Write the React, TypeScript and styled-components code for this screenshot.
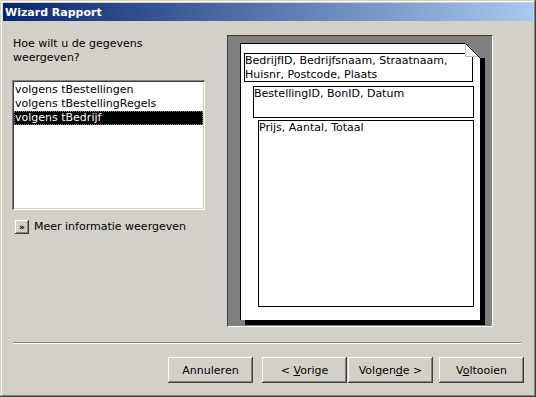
import styled, { createGlobalStyle } from "styled-components";

const GlobalStyle = createGlobalStyle`
  html, body {
    margin: 0;
    padding: 0;
    background: #d4d0c8;
  }
  body {
    font-family: "DejaVu Sans", Verdana, sans-serif;
    font-size: 11px;
    color: #000;
  }
`;

const items = ["volgens tBestellingen", "volgens tBestellingRegels", "volgens tBedrijf"];

const App = () => {
  return (
    <>
      <GlobalStyle />
      <Window>
        <TitleBar>Wizard Rapport</TitleBar>
        <Body>
          <Top>
            <Left>
              <Question>
                Hoe wilt u de gegevens
                <br />
                weergeven?
              </Question>
              <ListBox>
                {items.map((it, i) => (
                  <Item key={it} $selected={i === 2}>
                    {it}
                  </Item>
                ))}
              </ListBox>
              <MoreRow>
                <SmallButton>»</SmallButton>
                <span>Meer informatie weergeven</span>
              </MoreRow>
            </Left>
            <Frame>
              <Sheet>
                <Field $indent={3} $w={229} $h={29} $gap={9}>
                  BedrijfID, Bedrijfsnaam, Straatnaam,
                  <br />
                  Huisnr, Postcode, Plaats
                </Field>
                <Field $indent={12} $w={221} $h={32} $gap={4}>
                  BestellingID, BonID, Datum
                </Field>
                <Field $indent={17} $w={216} $h={187} $gap={2}>
                  Prijs, Aantal, Totaal
                </Field>
                <DogEar width="21" height="15" viewBox="0 0 21 15">
                  <polygon points="0,0 21,0 21,15 14,15 14,14" fill="#808080" />
                  <polygon points="0.5,0.5 0.5,13.5 14,13.5" fill="#ffffff" stroke="#c0c0c0" strokeWidth="1" />
                  <line x1="0.5" y1="0.5" x2="14" y2="14" stroke="#000" strokeWidth="1" />
                  <rect x="14" y="14" width="1" height="1" fill="#000" />
                </DogEar>
              </Sheet>
            </Frame>
          </Top>
          <Separator />
          <Buttons>
            <Button $after={9}>Annuleren</Button>
            <Button $after={1}>
              &lt; <u>V</u>orige
            </Button>
            <Button $after={6}>
              Volgen<u>d</u>e &gt;
            </Button>
            <Button>
              V<u>o</u>ltooien
            </Button>
          </Buttons>
        </Body>
      </Window>
    </>
  );
};

export default App;

const Window = styled.div`
  width: 536px;
  height: 397px;
  box-sizing: border-box;
  padding: 3px;
  background: #d4d0c8;
  box-shadow: inset -1px -1px #404040, inset 1px 1px #d4d0c8,
    inset -2px -2px #808080, inset 2px 2px #ffffff;
  display: flex;
  flex-direction: column;
`;

const TitleBar = styled.div`
  height: 18px;
  flex-shrink: 0;
  display: flex;
  align-items: center;
  padding-left: 2px;
  background: linear-gradient(to right, #0a246a, #a6caf0);
  color: #fff;
  font-weight: bold;
  font-size: 11px;
`;

const Body = styled.div`
  flex: 1;
  display: flex;
  flex-direction: column;
  padding: 14px 9px 0 9px;
`;

const Top = styled.div`
  display: flex;
  align-items: flex-start;
`;

const Left = styled.div`
  width: 193px;
  display: flex;
  flex-direction: column;
`;

const Question = styled.div`
  margin: 2px 0 0 1px;
  line-height: 14px;
`;

const ListBox = styled.div`
  margin-top: 15px;
  width: 193px;
  height: 130px;
  box-sizing: border-box;
  padding: 3px 2px 2px;
  background: #fff;
  box-shadow: inset 1px 1px #808080, inset -1px -1px #ffffff,
    inset 2px 2px #404040, inset -2px -2px #d4d0c8;
`;

const Item = styled.div<{ $selected?: boolean }>`
  height: 14px;
  line-height: 14px;
  padding-left: 1px;
  white-space: nowrap;
  background: ${(p) => (p.$selected ? "#000" : "transparent")};
  color: ${(p) => (p.$selected ? "#fff" : "#000")};
  outline: ${(p) => (p.$selected ? "1px dotted #808080" : "none")};
  outline-offset: -1px;
`;

const MoreRow = styled.div`
  margin-top: 10px;
  display: flex;
  align-items: center;
  gap: 5px;
  padding-left: 3px;
  line-height: 14px;
`;

const SmallButton = styled.div`
  width: 14px;
  height: 14px;
  box-sizing: border-box;
  display: flex;
  align-items: center;
  justify-content: center;
  font-size: 9px;
  font-weight: bold;
  line-height: 1;
  background: #d4d0c8;
  box-shadow: inset -1px -1px #404040, inset 1px 1px #ffffff,
    inset -2px -2px #808080;
`;

const Frame = styled.div`
  margin-left: 22px;
  width: 266px;
  height: 292px;
  box-sizing: border-box;
  background: #808080;
  border: 1px solid;
  border-color: #404040 #ffffff #ffffff #404040;
  padding: 7px 0 0 12px;
`;

const Sheet = styled.div`
  position: relative;
  width: 240px;
  height: 277px;
  box-sizing: border-box;
  background: #fff;
  border-left: 1px solid #000;
  border-top: 1px solid #000;
  box-shadow: 5px 5px 0 #000;
  display: flex;
  flex-direction: column;
`;

const Field = styled.div<{ $indent: number; $w: number; $h: number; $gap: number }>`
  margin-left: ${(p) => p.$indent}px;
  margin-top: ${(p) => p.$gap}px;
  width: ${(p) => p.$w}px;
  height: ${(p) => p.$h}px;
  box-sizing: border-box;
  border: 1px solid #000;
  line-height: 14px;
  padding-left: 0;
  white-space: nowrap;
`;

const DogEar = styled.svg`
  position: absolute;
  top: -1px;
  right: -6px;
  display: block;
`;

const Separator = styled.div`
  margin: 15px 3px 0 1px;
  border-top: 1px solid #808080;
  border-bottom: 1px solid #ffffff;
`;

const Buttons = styled.div`
  margin-top: 13px;
  display: flex;
  justify-content: flex-end;
`;

const Button = styled.button<{ $after?: number }>`
  width: 85px;
  height: 26px;
  margin: 0 ${(p) => p.$after ?? 0}px 0 0;
  padding: 0;
  border: none;
  background: #d4d0c8;
  color: #000;
  font-family: "DejaVu Sans", Verdana, sans-serif;
  font-size: 11px;
  box-shadow: inset -1px -1px #404040, inset 1px 1px #ffffff,
    inset -2px -2px #808080, inset 2px 2px #d4d0c8;
`;
